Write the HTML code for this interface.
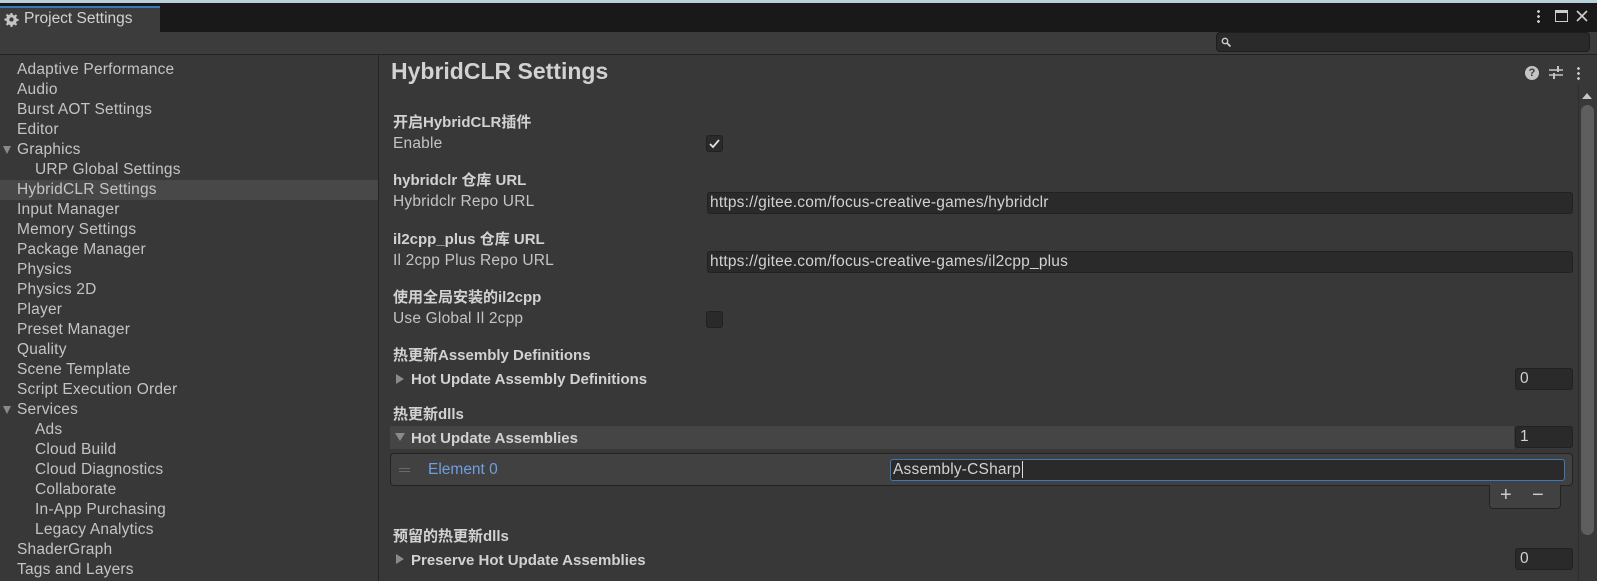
<!DOCTYPE html><html><head><meta charset="utf-8"><style>
*{box-sizing:border-box;margin:0;padding:0}
body{width:1597px;height:581px;background:#383838;font-family:"Liberation Sans","Noto Sans CJK SC",sans-serif;font-size:15.5px;color:#c4c4c4;position:relative;overflow:hidden}
.a{position:absolute;white-space:nowrap}
.side div{position:absolute;left:17px;height:20px;line-height:20px;letter-spacing:0.2px}
.lbl{position:absolute;left:393px;font-weight:bold;color:#d2d2d2;font-size:15px}
.sub{position:absolute;left:393px;letter-spacing:0.2px}
.fld{position:absolute;left:707px;width:866px;height:22px;background:#2a2a2a;border:1px solid #212121;border-radius:3px;line-height:20px;padding-left:2px;color:#d2d2d2;letter-spacing:0.2px}
.num{position:absolute;left:1515px;width:58px;height:22px;background:#2a2a2a;border:1px solid #212121;border-radius:3px;line-height:20px;padding-left:4px;color:#d2d2d2}
.tri{position:absolute;width:0;height:0}
</style></head><body>
<div class="a" style="left:0;top:0;width:1597px;height:32px;background:#191919"></div>
<div class="a" style="left:0;top:0;width:1597px;height:3px;background:#b8d0dc"></div>
<div class="a" style="left:0;top:6px;width:160px;height:26px;background:#3c3c3c;border-top:2px solid #3a79bb"></div>
<svg class="a" style="left:4px;top:12px" width="15" height="15" viewBox="0 0 16 16"><path fill="#c4c4c4" d="M7 1h2l.4 2 1.5.7 1.7-1.2 1.4 1.4-1.2 1.7.7 1.5 2 .4v2l-2 .4-.7 1.5 1.2 1.7-1.4 1.4-1.7-1.2-1.5.7-.4 2H7l-.4-2-1.5-.7-1.7 1.2-1.4-1.4 1.2-1.7L2.5 9.4.5 9V7l2-.4.7-1.5L2 3.4 3.4 2l1.7 1.2 1.5-.7z"/><circle cx="8" cy="8" r="2.3" fill="#3c3c3c"/></svg>
<div class="a" style="left:24px;top:9px;font-size:15.5px;color:#d2d2d2;line-height:20px">Project Settings</div>
<div class="a" style="left:1537px;top:9px;width:3px;height:14px;background:radial-gradient(circle,#ccc 1.3px,transparent 1.5px) 0 0/3px 5px"></div>
<div class="a" style="left:1555px;top:10px;width:13px;height:12px;border:1.5px solid #ccc;border-top-width:3px"></div>
<svg class="a" style="left:1575px;top:9px" width="14" height="14"><path d="M2 2L12 12M12 2L2 12" stroke="#ccc" stroke-width="1.7"/></svg>
<div class="a" style="left:0;top:32px;width:1597px;height:23px;background:#3c3c3c;border-bottom:1px solid #232323"></div>
<div class="a" style="left:1216px;top:32px;width:374px;height:20px;background:#2a2a2a;border:1px solid #1e1e1e;border-radius:4px"></div>
<svg class="a" style="left:1221px;top:37px" width="11" height="11"><circle cx="4" cy="4" r="2.7" stroke="#ccc" stroke-width="1.4" fill="none"/><path d="M6 6l3.5 3.5" stroke="#ccc" stroke-width="1.8"/></svg>
<div class="a" style="left:378px;top:55px;width:1px;height:526px;background:#232323"></div>
<div class="a" style="left:0;top:180px;width:378px;height:20px;background:#484848"></div>
<div class="side">
<div style="top:60px">Adaptive Performance</div><div style="top:80px">Audio</div><div style="top:100px">Burst AOT Settings</div><div style="top:120px">Editor</div><div style="top:140px">Graphics</div><div style="top:160px;left:35px">URP Global Settings</div><div style="top:180px">HybridCLR Settings</div><div style="top:200px">Input Manager</div><div style="top:220px">Memory Settings</div><div style="top:240px">Package Manager</div><div style="top:260px">Physics</div><div style="top:280px">Physics 2D</div><div style="top:300px">Player</div><div style="top:320px">Preset Manager</div><div style="top:340px">Quality</div><div style="top:360px">Scene Template</div><div style="top:380px">Script Execution Order</div><div style="top:400px">Services</div><div style="top:420px;left:35px">Ads</div><div style="top:440px;left:35px">Cloud Build</div><div style="top:460px;left:35px">Cloud Diagnostics</div><div style="top:480px;left:35px">Collaborate</div><div style="top:500px;left:35px">In-App Purchasing</div><div style="top:520px;left:35px">Legacy Analytics</div><div style="top:540px">ShaderGraph</div><div style="top:560px">Tags and Layers</div>
</div>
<div class="tri" style="left:3px;top:146px;border-left:4.5px solid transparent;border-right:4.5px solid transparent;border-top:8px solid #8a8a8a"></div>
<div class="tri" style="left:3px;top:406px;border-left:4.5px solid transparent;border-right:4.5px solid transparent;border-top:8px solid #8a8a8a"></div>
<div class="a" style="left:391px;top:57px;font-size:23px;font-weight:bold;color:#d2d2d2;line-height:28px">HybridCLR Settings</div>
<div class="a" style="left:1525px;top:66px;width:14px;height:14px;border-radius:50%;background:#c4c4c4;color:#383838;font-size:11px;font-weight:bold;text-align:center;line-height:14px">?</div>
<svg class="a" style="left:1549px;top:65px" width="14" height="14"><path d="M0 5h14M0 10h14" stroke="#c4c4c4" stroke-width="1.6"/><path d="M9 1v6M5 8v6" stroke="#c4c4c4" stroke-width="2"/></svg>
<div class="a" style="left:1577px;top:66px;width:3px;height:14px;background:radial-gradient(circle,#c4c4c4 1.3px,transparent 1.5px) 0 0/3px 5px"></div>
<div class="tri" style="left:1582px;top:93px;border-left:5px solid transparent;border-right:5px solid transparent;border-bottom:6px solid #c4c4c4"></div>
<div class="a" style="left:1578px;top:85px;width:1px;height:496px;background:#2d2d2d"></div>
<div class="a" style="left:1581px;top:105px;width:13px;height:430px;background:#5e5e5e;border-radius:7px"></div>

<div class="lbl" style="top:111px">开启HybridCLR插件</div><div class="sub" style="top:135px">Enable</div>
<div class="a" style="left:706px;top:135px;width:17px;height:17px;background:#2a2a2a;border:1px solid #212121;border-radius:3px"></div>
<svg class="a" style="left:708px;top:137px" width="13" height="13"><path d="M2 7l3 3 6-7" stroke="#ddd" stroke-width="1.8" fill="none"/></svg>
<div class="lbl" style="top:169px">hybridclr 仓库 URL</div><div class="sub" style="top:193px">Hybridclr Repo URL</div>
<div class="fld" style="top:192px">https://gitee.com/focus-creative-games/hybridclr</div>
<div class="lbl" style="top:228px">il2cpp_plus 仓库 URL</div><div class="sub" style="top:252px">Il 2cpp Plus Repo URL</div>
<div class="fld" style="top:251px">https://gitee.com/focus-creative-games/il2cpp_plus</div>
<div class="lbl" style="top:286px">使用全局安装的il2cpp</div><div class="sub" style="top:310px">Use Global Il 2cpp</div>
<div class="a" style="left:706px;top:311px;width:17px;height:17px;background:#2a2a2a;border:1px solid #212121;border-radius:3px"></div>
<div class="lbl" style="top:344px">热更新Assembly Definitions</div>
<div class="tri" style="left:396px;top:374px;border-top:5px solid transparent;border-bottom:5px solid transparent;border-left:8px solid #8a8a8a"></div>
<div class="lbl" style="left:411px;top:371px">Hot Update Assembly Definitions</div>
<div class="num" style="top:368px">0</div>
<div class="lbl" style="top:403px">热更新dlls</div>
<div class="a" style="left:390px;top:426px;width:1124px;height:23px;background:#454545"></div>
<div class="tri" style="left:395px;top:433px;border-left:5px solid transparent;border-right:5px solid transparent;border-top:8px solid #8a8a8a"></div>
<div class="lbl" style="left:411px;top:430px">Hot Update Assemblies</div>
<div class="num" style="top:426px">1</div>
<div class="a" style="left:390px;top:453px;width:1183px;height:33px;background:#414141;border:1px solid #232323;border-radius:4px"></div>
<div class="a" style="left:399px;top:468px;width:11px;height:1px;background:#6a6a6a;box-shadow:0 3px 0 #6a6a6a"></div>
<div class="a" style="left:428px;top:460px;color:#6f9fe0;line-height:20px">Element 0</div>
<div class="a" style="left:890px;top:459px;width:675px;height:22px;background:#2a2a2a;border:1px solid #3a79bb;border-radius:3px;line-height:20px;padding-left:2px;color:#d2d2d2;letter-spacing:0.2px">Assembly-CSharp<span style="border-left:1px solid #ddd;margin-left:1px"></span></div>
<div class="a" style="left:1489px;top:485px;width:72px;height:24px;background:#414141;border:1px solid #232323;border-top:none;border-radius:0 0 4px 4px"></div>
<div class="a" style="left:1500px;top:484px;font-size:20px;color:#ccc">+</div>
<div class="a" style="left:1532px;top:484px;font-size:20px;color:#ccc">−</div>
<div class="lbl" style="top:525px">预留的热更新dlls</div>
<div class="tri" style="left:396px;top:554px;border-top:5px solid transparent;border-bottom:5px solid transparent;border-left:8px solid #8a8a8a"></div>
<div class="lbl" style="left:411px;top:552px">Preserve Hot Update Assemblies</div>
<div class="num" style="top:548px">0</div>
</body></html>
